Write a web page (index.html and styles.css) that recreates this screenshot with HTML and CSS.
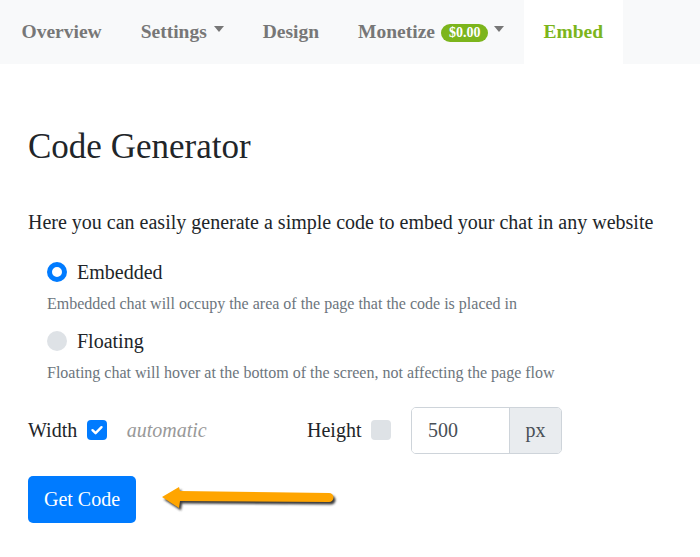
FILE: index.html
```html
<!DOCTYPE html>
<html>
<head>
<meta charset="utf-8">
<link rel="stylesheet" href="styles.css">
</head>
<body>
<nav class="nav">
  <a class="nav-link">Overview</a>
  <a class="nav-link">Settings<span class="caret"></span></a>
  <a class="nav-link">Design</a>
  <a class="nav-link">Monetize<span class="badge">$0.00</span><span class="caret"></span></a>
  <a class="nav-link active">Embed</a>
</nav>
<main class="content">
  <h1 class="title">Code Generator</h1>
  <p class="lead">Here you can easily generate a simple code to embed your chat in any website</p>
  <div class="options">
    <div class="option">
      <span class="radio checked"></span>
      <span class="option-label">Embedded</span>
    </div>
    <div class="option-desc">Embedded chat will occupy the area of the page that the code is placed in</div>
    <div class="option option-second">
      <span class="radio"></span>
      <span class="option-label">Floating</span>
    </div>
    <div class="option-desc">Floating chat will hover at the bottom of the screen, not affecting the page flow</div>
  </div>
  <div class="size-row">
    <div class="size-group width-group">
      <span class="size-label">Width</span>
      <span class="check on"><svg viewBox="0 0 20 20" width="20" height="20"><path d="M5.5 10.2 L8.6 13.2 L14.5 7.2" fill="none" stroke="#fff" stroke-width="2.4" stroke-linecap="round" stroke-linejoin="round"/></svg></span>
      <span class="auto">automatic</span>
    </div>
    <div class="size-group">
      <span class="size-label">Height</span>
      <span class="check"></span>
      <div class="input-group">
        <span class="input">500</span>
        <span class="addon">px</span>
      </div>
    </div>
  </div>
  <div class="actions">
    <button class="btn">Get Code</button>
    <svg class="arrow" width="184" height="34" viewBox="0 0 184 34">
      <defs>
        <filter id="sh" x="-10%" y="-40%" width="130%" height="200%">
          <feGaussianBlur stdDeviation="1.2"/>
        </filter>
      </defs>
      <path d="M4,16 L21,6 L22,10 L171,12 A4.5,4.5 0 0 1 171,21 L22,20 L21,27 Z" fill="#3a3a3a" filter="url(#sh)" transform="translate(2,2.5)"/>
      <path d="M4,16 L21,6 L22,10 L171,12 A4.5,4.5 0 0 1 171,21 L22,20 L21,27 Z" fill="#ffa500"/>
    </svg>
  </div>
</main>
</body>
</html>
```
FILE: styles.css
```css
* { box-sizing: border-box; }
body {
  margin: 0;
  font-family: "Liberation Serif", "Times New Roman", serif;
  color: #212529;
  background: #fff;
}
.nav {
  display: flex;
  height: 64px;
  background: #f8f9fa;
  padding-left: 2px;
}
.nav-link {
  display: flex;
  align-items: center;
  padding: 0 19.5px;
  font-size: 19.5px;
  font-weight: bold;
  color: #777;
}
.nav-link.active {
  background: #fff;
  color: #7cb51c;
}
.caret {
  display: inline-block;
  width: 0;
  height: 0;
  margin-left: 7px;
  margin-top: -6px;
  border-left: 5.5px solid transparent;
  border-right: 5.5px solid transparent;
  border-top: 6px solid #777;
}
.badge {
  display: inline-block;
  margin-left: 6px;
  background: #7cb51c;
  color: #fff;
  font-size: 14px;
  font-weight: bold;
  line-height: 18px;
  padding: 0 8px;
  border-radius: 9px;
  position: relative;
  top: 1px;
}
.badge + .caret {
  margin-left: 6px;
}
.content {
  padding: 0 28px;
}
.title {
  margin: 62px 0 0;
  font-size: 35px;
  font-weight: normal;
  line-height: 42px;
}
.lead {
  margin: 39px 0 0;
  font-size: 20px;
  line-height: 30px;
}
.options {
  margin: 20.5px 0 0 19px;
}
.option {
  display: flex;
  align-items: center;
  height: 29px;
}
.option-second {
  margin-top: 11.5px;
}
.radio {
  width: 20px;
  height: 20px;
  border-radius: 50%;
  background: #dee2e6;
  margin-right: 10px;
}
.radio.checked {
  background: #fff;
  border: 5.5px solid #007bff;
}
.option-label {
  font-size: 20px;
  line-height: 29px;
}
.option-desc {
  font-size: 16px;
  color: #6c757d;
  line-height: 22px;
  margin-top: 6.5px;
}
.size-row {
  display: flex;
  align-items: center;
  margin-top: 22.5px;
}
.size-group {
  display: flex;
  align-items: center;
}
.width-group {
  width: 279px;
}
.size-label {
  font-size: 20px;
  line-height: 29px;
  margin-right: 9.5px;
}
.check {
  display: inline-block;
  width: 20px;
  height: 20px;
  border-radius: 4px;
  background: #dee2e6;
  margin-right: 20px;
}
.check.on {
  background: #007bff;
}
.check svg { display: block; }
.auto {
  font-size: 20px;
  font-style: italic;
  color: #999;
}
.input-group {
  display: flex;
  height: 47px;
  border: 1px solid #ced4da;
  border-radius: 5px;
  overflow: hidden;
}
.input {
  width: 97px;
  display: flex;
  align-items: center;
  padding-left: 16px;
  font-size: 20px;
  color: #495057;
  background: #fff;
}
.addon {
  width: 52px;
  display: flex;
  align-items: center;
  justify-content: center;
  border-left: 1px solid #ced4da;
  background: #e9ecef;
  font-size: 20px;
  color: #495057;
}
.actions {
  position: relative;
  margin-top: 22px;
}
.btn {
  display: block;
  width: 108px;
  height: 47px;
  border: none;
  border-radius: 5px;
  background: #007bff;
  color: #fff;
  font-family: inherit;
  font-size: 20px;
  padding: 0;
}
.arrow {
  position: absolute;
  left: 130px;
  top: 5px;
}
```
